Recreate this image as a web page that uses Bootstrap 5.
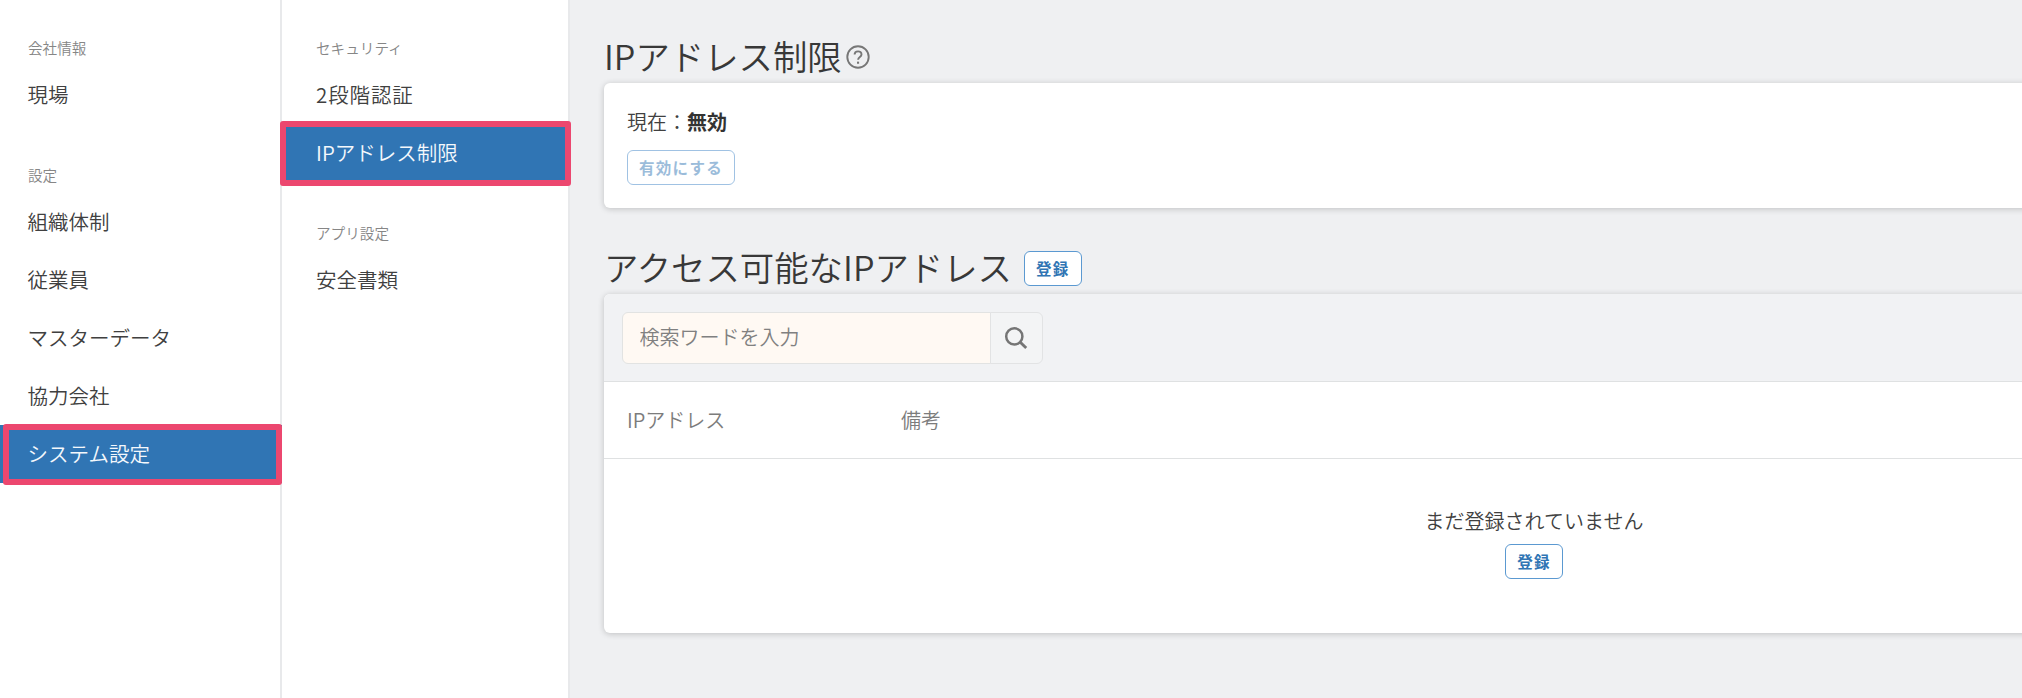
<!DOCTYPE html>
<html lang="ja">
<head>
<meta charset="utf-8">
<meta name="viewport" content="width=device-width, initial-scale=1">
<title>IPアドレス制限</title>
<link href="https://cdn.jsdelivr.net/npm/bootstrap@5.3.0/dist/css/bootstrap.min.css" rel="stylesheet">
<style>
body{font-family:"Noto Sans CJK JP",sans-serif;background:#eff0f2;color:#404040;overflow:hidden;height:698px;font-size:20px;line-height:30px;font-weight:350}
.side{background:#fff;border-right:2px solid #e8e9eb;padding-top:30px}
.side-a{width:282px}
.side-b{width:288px}
.side-label{font-size:14.6px;height:36px;line-height:35px;color:#868686;padding-left:28px}
.side .nav-link{position:relative;height:58px;line-height:56px;padding:0 0 0 27.5px;color:#404040;font-size:20.5px;white-space:nowrap}
.side-b .side-label,.side-b .nav-link{padding-left:34px}
.side .nav-group{margin-bottom:33px}
.side .nav-link.active{background:#3075b4;color:#f4f8fc}
.side .two-step{letter-spacing:.9px}
.side-a .active,.side-b .active{margin-right:-2px}
.focus-frame{position:absolute;border:6px solid #ec476f;border-radius:3px;z-index:2}
.side-a .focus-frame{inset:-1px 0 -2px 3px}
.side-b .focus-frame{inset:-3px -1px -4px -2px}
.content{padding:35px 0 0 34px;min-width:0}
.page-title{font-size:34.4px;line-height:40px;padding-bottom:4px;font-weight:350;color:#383838;margin:0;white-space:nowrap}
.help{margin-left:3px}
.title-two{margin:38px 0 4px}
.title-two .btn{margin-left:12px}
.panel{width:1860px;border:0;border-radius:6px;box-shadow:0 1px 6px rgba(0,0,0,.2);color:#404040}
.panel-status{height:125px;padding:24px 23px 23px}
.panel-status b{color:#333}
.btn-line{--bs-btn-color:#3075b4;--bs-btn-bg:#fff;--bs-btn-border-color:#5b99d1;--bs-btn-disabled-color:#3075b4;--bs-btn-disabled-bg:#fff;--bs-btn-disabled-border-color:#3b82c6;--bs-btn-disabled-opacity:.48;display:block;height:35px;padding:0 11px;font-size:15.5px;line-height:31px;font-weight:700;letter-spacing:1.3px;border-radius:6px}
.search-bar{height:88px;background:#f1f2f4;border-bottom:1px solid #dfe1e2;border-radius:6px 6px 0 0;padding:18px}
.search-box{width:421px;height:52px}
.search-box .form-control{background:#fff9f3;border:1px solid #e2e3e2;font-size:20px;padding:0 17px 2px 16.5px;border-radius:6px;font-weight:350}
.search-box .form-control::placeholder{color:#808080;opacity:1}
.search-box .btn{width:53px;padding:0 2px 0 0;border:1px solid #e2e3e4;background:#f3f4f5;border-radius:6px}
.head-row{height:77px;border-bottom:1px solid #dfe1e2;color:#7c7c7c;padding-left:23px}
.head-ip{width:274px}
.empty-state{height:174px;padding-top:47px}
.empty-state .btn{margin-top:8px}
</style>
</head>
<body>
<div class="d-flex h-100">
  <nav class="side side-a flex-shrink-0">
    <div class="nav-group">
      <div class="side-label">会社情報</div>
      <div class="nav flex-column flex-nowrap"><a class="nav-link">現場</a></div>
    </div>
    <div class="nav-group">
      <div class="side-label">設定</div>
      <div class="nav flex-column flex-nowrap">
        <a class="nav-link">組織体制</a>
        <a class="nav-link">従業員</a>
        <a class="nav-link">マスターデータ</a>
        <a class="nav-link">協力会社</a>
        <a class="nav-link active">システム設定<span class="focus-frame"></span></a>
      </div>
    </div>
  </nav>
  <nav class="side side-b flex-shrink-0">
    <div class="nav-group">
      <div class="side-label">セキュリティ</div>
      <div class="nav flex-column flex-nowrap">
        <a class="nav-link two-step">2段階認証</a>
        <a class="nav-link active">IPアドレス制限<span class="focus-frame"></span></a>
      </div>
    </div>
    <div class="nav-group">
      <div class="side-label">アプリ設定</div>
      <div class="nav flex-column flex-nowrap"><a class="nav-link">安全書類</a></div>
    </div>
  </nav>
  <main class="content flex-grow-1">
    <div class="d-flex align-items-center title-one">
      <h1 class="page-title">IPアドレス制限</h1>
      <svg class="help" width="26" height="26" viewBox="0 0 26 26" fill="none" stroke="#777" stroke-width="1.9"><circle cx="13" cy="13" r="10.7"/><path d="M9.6 10.6c0-4.3 6.9-4.3 6.9-.2 0 2.5-3.4 2.6-3.4 5.4"/><path d="M12 18.7h2.1" stroke-width="2.1"/></svg>
    </div>
    <section class="card panel panel-status mt-1">
      <div>現在：<b class="fw-bold">無効</b></div>
      <button class="btn btn-line align-self-start mt-auto" disabled>有効にする</button>
    </section>
    <div class="d-flex align-items-center title-two">
      <h2 class="page-title">アクセス可能なIPアドレス</h2>
      <button class="btn btn-line">登録</button>
    </div>
    <section class="card panel">
      <div class="search-bar">
        <div class="input-group search-box">
          <input class="form-control" type="text" placeholder="検索ワードを入力">
          <button class="btn d-flex align-items-center justify-content-center" aria-label="検索"><svg width="26" height="26" viewBox="0 0 26 26" fill="none" stroke="#757575" stroke-width="2.5"><circle cx="11.3" cy="11.4" r="8.1"/><path d="M17 17l6.2 6" stroke-width="2.9"/></svg></button>
        </div>
      </div>
      <div class="head-row d-flex align-items-center"><div class="head-ip">IPアドレス</div><div>備考</div></div>
      <div class="empty-state d-flex flex-column align-items-center">
        <div>まだ登録されていません</div>
        <button class="btn btn-line">登録</button>
      </div>
    </section>
  </main>
</div>
<script src="https://cdn.jsdelivr.net/npm/bootstrap@5.3.0/dist/js/bootstrap.bundle.min.js"></script>
</body>
</html>
